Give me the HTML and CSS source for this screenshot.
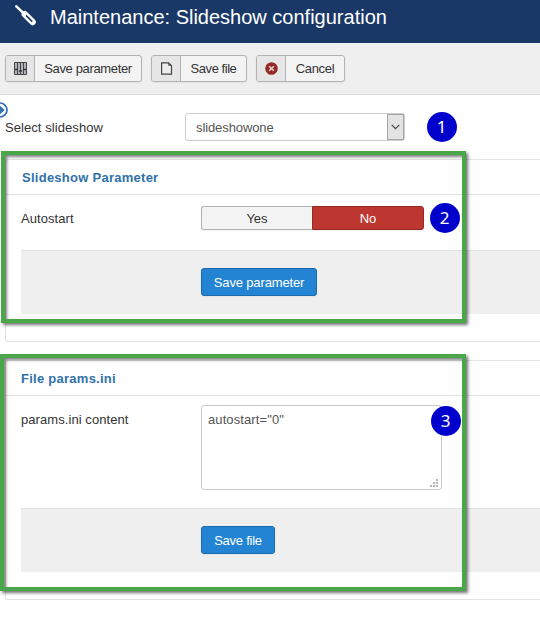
FILE: index.html
```html
<!DOCTYPE html>
<html lang="en">
<head>
<meta charset="utf-8">
<title>Maintenance: Slideshow configuration</title>
<link rel="stylesheet" href="styles.css">
</head>
<body>
<header class="header">
  <svg class="tool" width="22" height="22" viewBox="0 0 22 22"><path d="M1.3 1.3 8.5 8.2" stroke="#fff" stroke-width="2.5" stroke-linecap="round"/><path d="M9.8 9.2 17.6 17" stroke="#fff" stroke-width="6.4" stroke-linecap="round"/><path d="M11 10.4 17.2 16.6" stroke="#1a3867" stroke-width="1.5"/></svg>
  <h1>Maintenance: Slideshow configuration</h1>
</header>
<nav class="toolbar">
  <button class="tool-btn save-param"><i><svg width="13" height="13" viewBox="0 0 13 13"><path d="M.5.5h12v12H.5z" fill="#aeb2ba" stroke="#474443"/><path d="M3.5 1v11M6.5 1v11M9.5 1v11" stroke="#474443"/><path d="M1 7.5h3M5 9h3M6 5.5h1M9 7.5h3" stroke="#333" stroke-width="1.6"/></svg></i><span>Save parameter</span></button>
  <button class="tool-btn save-file"><i><svg width="13" height="13" viewBox="0 0 13 13"><path d="M1.6.8h7l2.9 2.9v8.5H1.6z" fill="#ececec" stroke="#444" stroke-width="1.2"/><path d="M8.4.8v3h3z" fill="#444"/></svg></i><span>Save file</span></button>
  <button class="tool-btn cancel"><i><svg width="13" height="13" viewBox="0 0 13 13"><circle cx="6.5" cy="6.5" r="6.3" fill="#942a25"/><path d="m4.2 4.2 4.6 4.6m0-4.6L4.2 8.8" stroke="#e6d5d4" stroke-width="1.5"/></svg></i><span>Cancel</span></button>
</nav>
<main>
  <svg class="toggle" width="16" height="16" viewBox="0 0 16 16"><circle cx="8" cy="8" r="7" fill="#fff" stroke="#3071b5" stroke-width="1.7"/><path d="M3 6.5h4.5V3.2L12.7 8l-5.2 4.8V9.500H3z" fill="#3071b5"/></svg>
  <div class="row select-row">
    <label class="l-select">Select slideshow</label>
    <div class="select"><span>slideshowone</span><b><svg width="9" height="6" viewBox="0 0 9 6"><path d="m.7.8 3.8 3.8L8.300.8" fill="none" stroke="#444" stroke-width="1.2"/></svg></b></div>
    <span class="num one">1</span>
  </div>
  <section class="panel first">
    <h2>Slideshow Parameter</h2>
    <div class="row autostart"><label>Autostart</label><div class="switch"><span>Yes</span><span class="on">No</span></div></div>
    <div class="actions"><button class="primary wide">Save parameter</button></div>
    <div class="frame f1"></div><span class="num two">2</span>
  </section>
  <section class="panel second">
    <h2>File params.ini</h2>
    <div class="row params"><label>params.ini content</label><div class="area"><span>autostart="0"</span><svg width="8" height="8" viewBox="0 0 8 8" fill="#b5b5b5"><path d="M6 0h2v2H6zM3 3h2v2H3zM6 3h2v2H6zM0 6h2v2H0zM3 6h2v2H3zM6 6h2v2H6z"/></svg></div></div>
    <div class="actions"><button class="primary narrow">Save file</button></div>
    <div class="frame f2"></div><span class="num three">3</span>
  </section>
</main>
</body>
</html>
```
FILE: styles.css
```css
* { box-sizing: border-box; }
body { margin: 0; height: 624px; overflow: hidden; background: #fff; color: #333; font: 13px/18px "Liberation Sans", Arial, sans-serif; }
button { font: inherit; color: inherit; padding: 0; }
.header { height: 43px; background: #1a3867; display: flex; padding: 5px 0 0 15px; }
h1 { margin: 0 0 0 13px; font-size: 20px; line-height: 24px; font-weight: 400; color: #fff; white-space: nowrap; }
.toolbar { height: 52px; background: #efefef; border-bottom: 1px solid #dcdcdc; padding: 12px 5px 0; display: flex; gap: 9px; align-items: flex-start; }
.tool-btn { height: 27px; display: flex; background: #f3f3f3; border: 1px solid #b3b3b3; border-radius: 3px; overflow: hidden; box-shadow: 0 1px 2px rgba(0,0,0,.05); }
.tool-btn i { width: 29px; height: 25px; background: #e6e6e6; border-right: 1px solid #b3b3b3; display: flex; align-items: center; justify-content: center; }
.tool-btn span { flex: 1; text-align: center; line-height: 26px; white-space: nowrap; letter-spacing: -.35px; }
.save-param { width: 137px; }
.tool-btn.save-file span { letter-spacing: -.45px; }
.save-file { width: 96px; }
.cancel { width: 89px; }
.tool-btn.cancel span { letter-spacing: -.3px; }
main { position: relative; padding: 18px 0 0 5px; }
.toggle { position: absolute; left: -8.5px; top: 7px; }
.row { display: flex; }
.row label { width: 180px; flex: none; letter-spacing: .07px; }
.select-row { height: 28px; position: relative; }
.l-select { padding-top: 6px; }
.select { width: 220px; height: 28px; border: 1px solid #ccc; border-radius: 3px; display: flex; justify-content: space-between; color: #555; line-height: 28px; padding-left: 10px; letter-spacing: -.1px; }
.select b { width: 17px; border: 1px solid #a6a6a6; background: #e3e3e3; display: flex; align-items: center; justify-content: center; }
.num { position: absolute; width: 30px; height: 30px; border-radius: 50%; background: #0000cd; color: #fff; font: 17px/29px "Noto Sans", sans-serif; text-align: center; }
.one { left: 421.5px; top: -1px; }
.two { left: 423.5px; top: 42.5px; }
.three { left: 424.5px; top: 44.500px; }
.panel { position: relative; border: 1px solid #e3e3e3; border-right: 0; border-radius: 3px 0 0 3px; }
.first { height: 183px; margin-top: 18px; }
.second { height: 240px; margin-top: 18px; }
h2 { margin: 0; height: 35px; border-bottom: 1px solid #e3e3e3; padding-left: 15px; font-size: 13px; line-height: 35px; color: #3071a9; letter-spacing: .26px; }
.first h2 { padding-left: 16px; }
.panel label { padding: 4px 0 0 0; }
.panel .row { padding-left: 15px; }
.autostart { height: 55px; padding-top: 11px; }
.params { height: 112px; padding-top: 9px; }
.panel .params label { padding-top: 6px; }
.switch { width: 223px; height: 24px; display: flex; line-height: 23px; text-align: center; box-shadow: 0 1px 2px rgba(0,0,0,.05); border-radius: 3px; }
.switch span { flex: 1; background: #f3f3f3; border: 1px solid #b3b3b3; border-right: 0; border-radius: 3px 0 0 3px; }
.switch .on { background: #bd362f; border: 1px solid #942a25; border-radius: 0 3px 3px 0; color: #fff; }
.actions { margin-left: 15px; height: 64px; background: #efefef; border-top: 1px solid #e3e3e3; padding: 17px 0 0 180px; }
.primary { display: block; height: 28px; background: #2384d3; border: 1px solid #1b6aaa; border-radius: 3px; color: #fff; box-shadow: 0 1px 2px rgba(0,0,0,.05); white-space: nowrap; letter-spacing: -.15px; line-height: 27px; }
.wide { width: 116px; }
.narrow { width: 74px; letter-spacing: -.25px; }
.area { position: relative; width: 241px; height: 85px; border: 1px solid #c8c8c8; border-radius: 3px; padding: 5px 6px; color: #555; letter-spacing: .1px; }
.area svg { position: absolute; right: 3px; bottom: 2px; }
.frame { position: absolute; border: 4px solid #49a749; box-shadow: 2px 2px 3px rgba(0,0,0,.55), inset 2px 2px 3px rgba(0,0,0,.5); }
.f1 { left: -5px; top: -9px; width: 465px; height: 172px; }
.f2 { left: -6px; top: -7px; width: 466px; height: 237px; }
```
